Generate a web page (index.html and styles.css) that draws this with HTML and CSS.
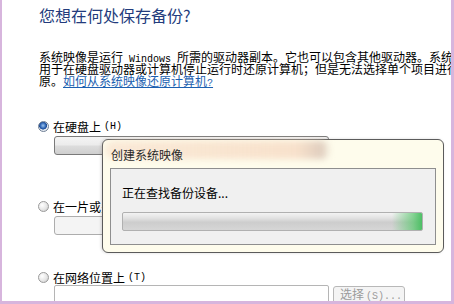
FILE: index.html
```html
<html lang="zh-CN"><head>
  <meta charset="UTF-8">
  <title>创建系统映像</title>
  <link rel="stylesheet" href="styles.css">
</head>
<body>
  <div class="window">
    <div class="content">
      <h1 class="heading">您想在何处保存备份?</h1>

      <p class="desc">
        <span class="line">系统映像是运行<span class="mono"> Windows </span>所需的驱动器副本。它也可以包含其他驱动器。系统映像可</span>
        <span class="line">用于在硬盘驱动器或计算机停止运行时还原计算机；但是无法选择单个项目进行还</span>
        <span class="line">原。<a href="#" class="link">如何从系统映像还原计算机<span class="mono">?</span></a></span>
      </p>

      <div class="option first">
        <div class="radio-row"><span class="radio checked"></span>在硬盘上 <span class="mono">(H)</span></div>
        <div class="combo"></div>
      </div>

      <div class="option second">
        <div class="radio-row"><span class="radio"></span>在一片或多片 <span class="mono">DVD</span> 上 <span class="mono">(D)</span></div>
        <div class="combo light"></div>
      </div>

      <div class="option third">
        <div class="radio-row"><span class="radio"></span>在网络位置上 <span class="mono">(T)</span></div>
        <div class="path-row">
          <div class="textbox"></div>
          <div class="btn">选择<span class="mono">(S)...</span></div>
        </div>
      </div>
    </div>

    <div class="dialog">
      <div class="dialog-title"><span class="caption">创建系统映像</span></div>
      <div class="dialog-body">
        <div class="status">正在查找备份设备...</div>
        <div class="progress"><div class="glow"></div></div>
      </div>
    </div>
  </div>
</body></html>
```

FILE: styles.css
```css
html, body {
  margin: 0;
  padding: 0;
  overflow: hidden;
  background: #ffffff;
}
.window {
  position: relative;
  width: 454px;
  height: 304px;
  box-sizing: border-box;
  border-left: 2px solid #d7b5dd;
  border-right: 3px solid #d7b5dd;
  border-bottom: 3px solid #d7b5dd;
  background: #ffffff;
  overflow: hidden;
  font-family: "Noto Sans CJK SC", sans-serif;
  font-size: 12px;
  color: #000;
}
.content {
  padding-left: 37px;
}
.mono {
  font-family: "Liberation Mono", monospace;
  font-size: 10px;
  line-height: 10px;
}
.heading {
  margin: 5px 0 0 0;
  height: 20px;
  font-size: 16px;
  line-height: 20px;
  font-weight: normal;
  color: #233b7c;
}
.desc {
  margin: 26px 0 0 0;
  white-space: nowrap;
}
.desc .line {
  display: block;
  height: 12px;
  line-height: 12px;
}
.link {
  color: #1c5fb0;
  text-decoration: underline;
}
.option.first { margin-top: 33px; }
.option.second { margin-top: 45px; }
.option.third { margin-top: 36px; }
.radio-row {
  display: flex;
  align-items: center;
  height: 13px;
  line-height: 13px;
  white-space: nowrap;
}
.radio-row .mono {
  margin-left: 3px;
}
.radio {
  width: 11px;
  height: 11px;
  box-sizing: border-box;
  border-radius: 50%;
  border: 1px solid #9a9a9a;
  background: radial-gradient(circle at 35% 35%, #ffffff 0%, #e6e6e6 55%, #c4c4c4 100%);
  margin: 0 4px 0 -1px;
  flex: none;
}
.radio.checked {
  border-color: #6f7f95;
  background: radial-gradient(circle at 45% 40%, #9cc4ee 0%, #2d64b4 38%, #1f4c92 50%, #eef2f7 58%, #c9d0da 100%);
}
.combo {
  margin: 3px 0 0 15px;
  width: 275px;
  height: 19px;
  box-sizing: border-box;
  border: 1px solid #7a7a7a;
  border-radius: 3px;
  background: linear-gradient(#f4f4f4 0%, #ececec 45%, #dcdcdc 55%, #cfcfcf 100%);
}
.combo.light {
  border-color: #adadad;
  background: #f4f4f4;
}
.path-row {
  display: flex;
  gap: 4px;
  margin: 1px 0 0 15px;
}
.textbox {
  width: 275px;
  height: 22px;
  box-sizing: border-box;
  border: 1px solid #b5b5b5;
  border-radius: 2px;
  background: #ffffff;
}
.btn {
  width: 72px;
  height: 22px;
  box-sizing: border-box;
  margin-top: 1px;
  padding-left: 6px;
  border: 1px solid #b8b8b8;
  border-radius: 3px;
  background: #f4f4f4;
  color: #9b9b9b;
  line-height: 13px;
  white-space: nowrap;
}
.btn .mono {
  margin-left: 2px;
}

/* popup dialog */
.dialog {
  position: absolute;
  left: 100px;
  top: 139px;
  width: 342px;
  height: 114px;
  box-sizing: border-box;
  border: 1px solid #5b5b5b;
  border-radius: 6px;
  background: #fefcec;
  box-shadow: -1px 0 3px rgba(0, 0, 0, 0.15);
  display: flex;
  flex-direction: column;
}
.dialog-title {
  position: relative;
  height: 28px;
  box-sizing: border-box;
  padding: 9px 0 0 8px;
  line-height: 12px;
  color: #2a2a2a;
}
.dialog-title::before {
  content: "";
  position: absolute;
  left: 2px;
  top: 1px;
  width: 226px;
  height: 18px;
  border-radius: 9px;
  background: linear-gradient(90deg, rgba(248, 226, 206, 0.7), rgba(247, 222, 200, 0.9) 85%, rgba(220, 200, 185, 0.9) 96%, rgba(247, 222, 200, 0));
  filter: blur(3px);
}
.caption {
  position: relative;
  z-index: 1;
}
.dialog-body {
  flex: 1;
  margin: 0 7px 7px 7px;
  border: 1px solid #8e8e8e;
  background: #f0f0f0;
  padding: 18px 12px 0 11px;
}
.status {
  line-height: 12px;
  color: #000;
}
.progress {
  position: relative;
  margin-top: 13px;
  height: 19px;
  box-sizing: border-box;
  border: 1px solid #b0b0b0;
  border-radius: 2px;
  background: linear-gradient(#f3f3f3 0%, #e2e2e2 30%, #cdcdcd 55%, #d6d6d6 100%);
  overflow: hidden;
}
.glow {
  position: absolute;
  right: 0;
  top: 0;
  bottom: 0;
  width: 30px;
  background: linear-gradient(90deg, rgba(90, 200, 110, 0), rgba(90, 200, 110, 0.7) 70%, rgba(70, 190, 95, 0.95));
}
```
